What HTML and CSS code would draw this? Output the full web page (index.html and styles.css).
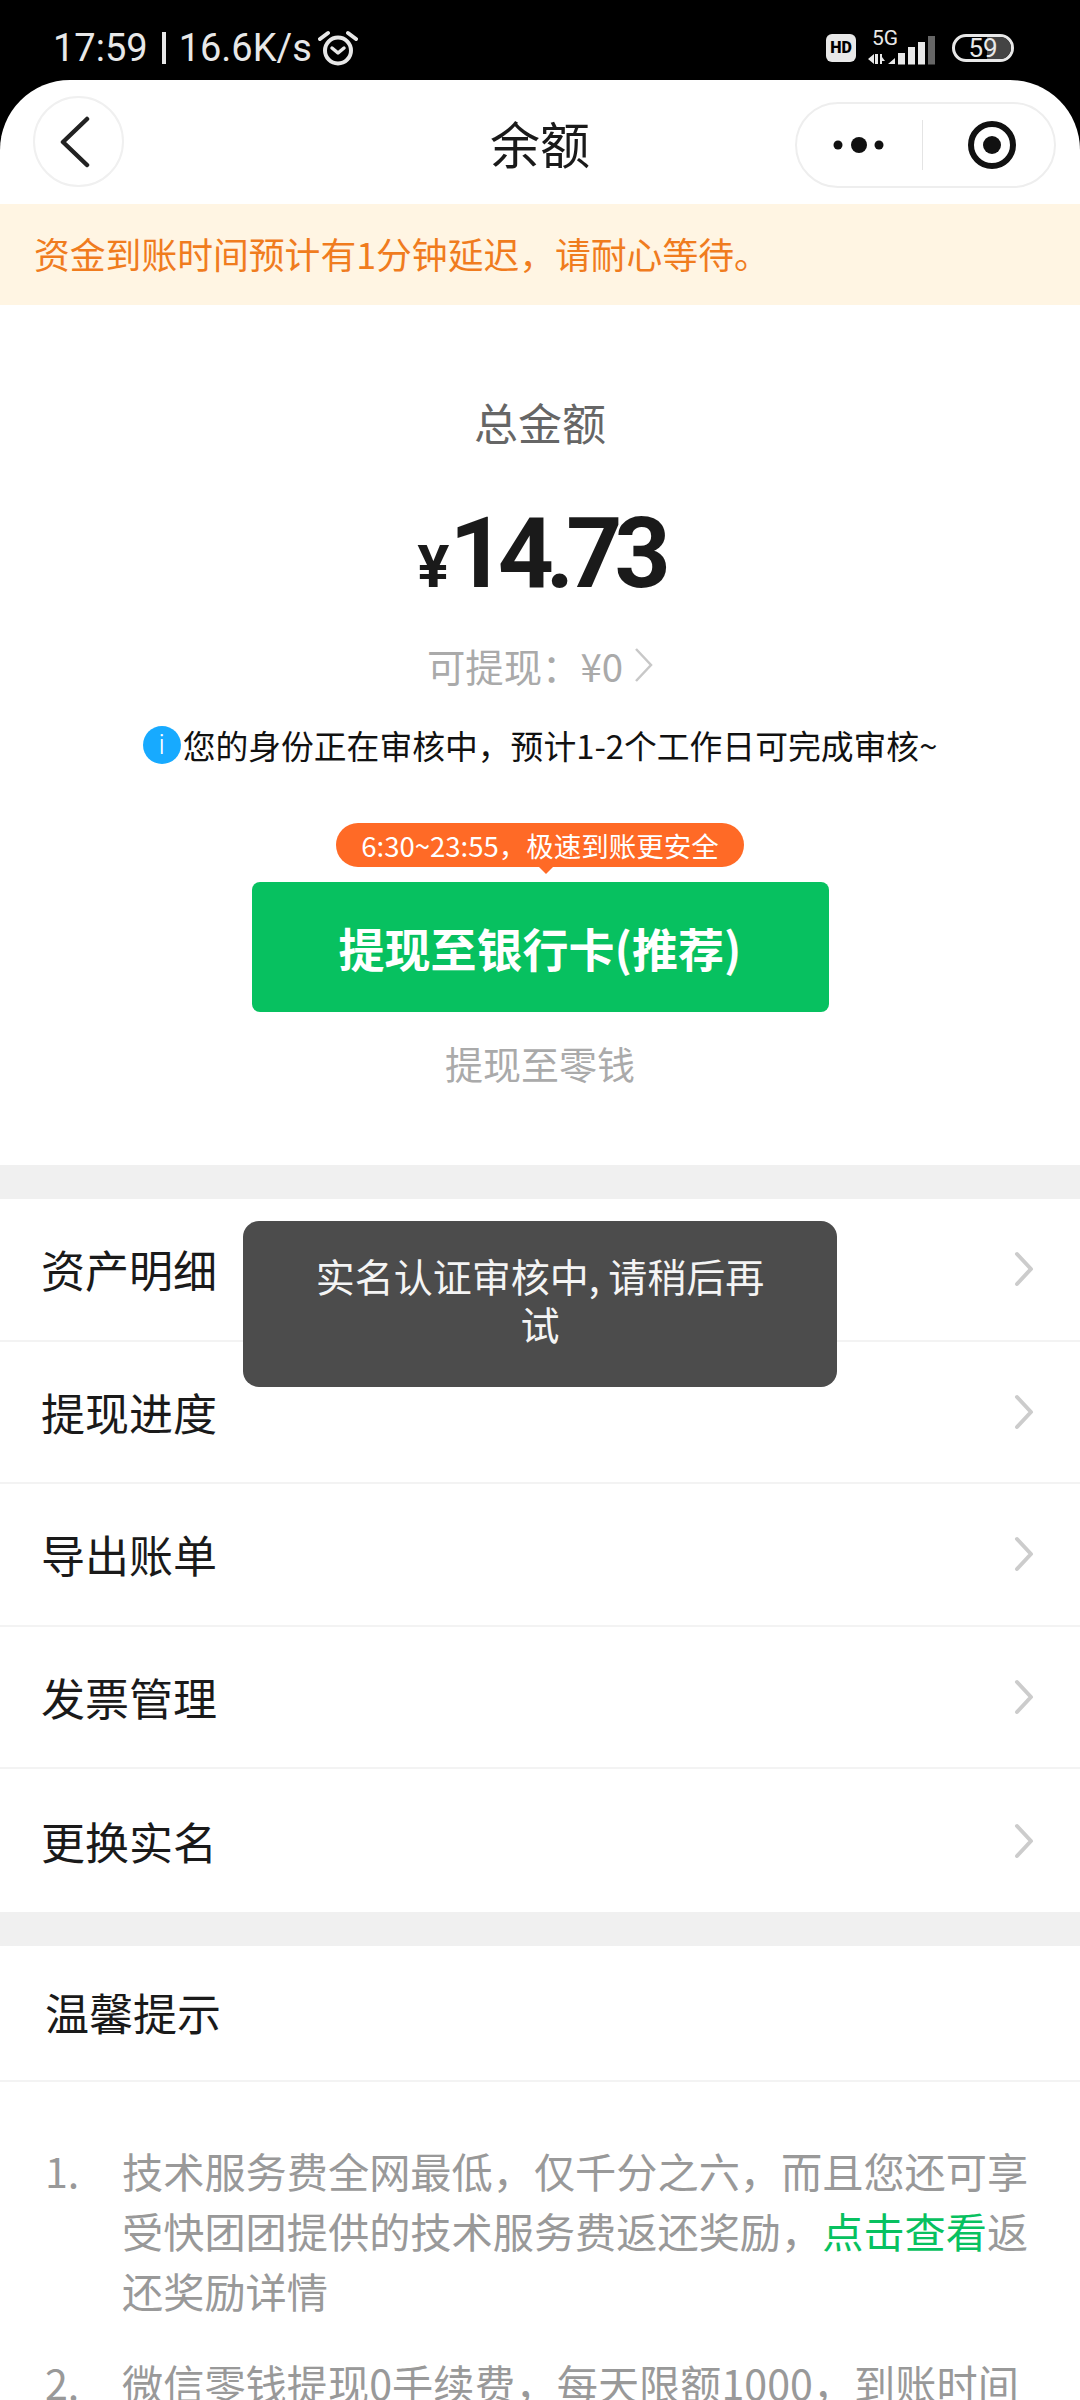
FILE: index.html
```html
<!DOCTYPE html>
<html lang="zh-CN">
<head>
    <meta charset="UTF-8">
    <meta name="viewport" content="width=device-width, initial-scale=1.0">
    <title>余额</title>
    <link rel="stylesheet" href="styles.css">
</head>
<body>
    <div class="status-bar">
        <div class="status-left">
            <span>17:59</span>
            <span class="status-sep"></span>
            <span>16.6K/s</span>
            <svg class="alarm" viewBox="0 0 40 36" width="40" height="36">
                <circle cx="20" cy="20.5" r="13" fill="none" stroke="#e8e8e8" stroke-width="4"/>
                <path d="M14 18l6 5 6-5" fill="none" stroke="#e8e8e8" stroke-width="3.5" stroke-linecap="round" stroke-linejoin="round"/>
                <path d="M2 9l8-6M38 9l-8-6" fill="none" stroke="#e8e8e8" stroke-width="4" stroke-linecap="round"/>
            </svg>
        </div>
        <div class="status-right">
            <span class="hd">HD</span>
            <div class="net">
                <span class="net-label">5G</span>
                <svg viewBox="0 0 68 30" width="68" height="30">
                    <path d="M0 24l6-5v10zM7 19h3v10H7zM12 19h2v10h-2zM14 22l3 4h-3zM20 29l7-6v6zM30 18h7v11.500h-7zM40 12h7v17.500h-7zM50 7h7v22.500h-7z" fill="#e8e8e8"/>
                    <path d="M60 1h7v28.500h-7z" fill="#666"/>
                </svg>
            </div>
            <div class="battery"><span class="battery-fill"></span><span class="battery-num">59</span></div>
        </div>
    </div>

    <div class="page">
        <div class="nav">
            <div class="nav-back">
                <svg viewBox="0 0 32 52" width="32" height="52">
                    <path d="M28 3L4 26l24 23" fill="none" stroke="#222" stroke-width="4.5" stroke-linecap="round" stroke-linejoin="round"/>
                </svg>
            </div>
            <div class="nav-title">余额</div>
            <div class="capsule">
                <div class="capsule-cell">
                    <svg viewBox="0 0 54 18" width="54" height="18">
                        <circle cx="5" cy="9" r="4.5" fill="#111"/>
                        <circle cx="26" cy="9" r="8" fill="#111"/>
                        <circle cx="46" cy="9" r="4.5" fill="#111"/>
                    </svg>
                </div>
                <div class="capsule-line"></div>
                <div class="capsule-cell capsule-cell-right">
                    <svg viewBox="0 0 48 48" width="48" height="48">
                        <circle cx="24" cy="24" r="21" fill="none" stroke="#111" stroke-width="6"/>
                        <circle cx="24" cy="24" r="9" fill="#111"/>
                    </svg>
                </div>
            </div>
        </div>

        <div class="notice">资金到账时间预计有1分钟延迟，请耐心等待。</div>

        <div class="summary">
            <div class="total-label">总金额</div>
            <div class="total"><span class="total-unit">¥</span>14.73</div>
            <div class="withdrawable">
                <span>可提现：¥0</span>
                <svg viewBox="0 0 20 36" width="20" height="36">
                    <path d="M3 2l15 16L3 34" fill="none" stroke="#c8c8c8" stroke-width="2.5"/>
                </svg>
            </div>
            <div class="verify">
                <span class="verify-icon">i</span>
                <span>您的身份正在审核中，预计1-2个工作日可完成审核~</span>
            </div>
            <div class="tag-row">
                <div class="tag">6:30~23:55，极速到账更安全</div>
            </div>
            <button class="btn-bank">提现至银行卡(推荐)</button>
            <div class="btn-wallet">提现至零钱</div>
        </div>

        <div class="gap"></div>

        <div class="menu">
            <div class="menu-row">
                <span>资产明细</span>
                <svg class="row-arrow" viewBox="0 0 20 36" width="20" height="36"><path d="M3 3l14 15L3 33" fill="none" stroke="#ccc" stroke-width="4" stroke-linecap="round" stroke-linejoin="round"/></svg>
            </div>
            <div class="menu-row">
                <span>提现进度</span>
                <svg class="row-arrow" viewBox="0 0 20 36" width="20" height="36"><path d="M3 3l14 15L3 33" fill="none" stroke="#ccc" stroke-width="4" stroke-linecap="round" stroke-linejoin="round"/></svg>
            </div>
            <div class="menu-row">
                <span>导出账单</span>
                <svg class="row-arrow" viewBox="0 0 20 36" width="20" height="36"><path d="M3 3l14 15L3 33" fill="none" stroke="#ccc" stroke-width="4" stroke-linecap="round" stroke-linejoin="round"/></svg>
            </div>
            <div class="menu-row">
                <span>发票管理</span>
                <svg class="row-arrow" viewBox="0 0 20 36" width="20" height="36"><path d="M3 3l14 15L3 33" fill="none" stroke="#ccc" stroke-width="4" stroke-linecap="round" stroke-linejoin="round"/></svg>
            </div>
            <div class="menu-row">
                <span>更换实名</span>
                <svg class="row-arrow" viewBox="0 0 20 36" width="20" height="36"><path d="M3 3l14 15L3 33" fill="none" stroke="#ccc" stroke-width="4" stroke-linecap="round" stroke-linejoin="round"/></svg>
            </div>
        </div>

        <div class="gap"></div>

        <div class="tips-title">温馨提示</div>
        <ol class="tips">
            <li class="tip">
                <span class="tip-num">1.</span>
                <div class="tip-text">技术服务费全网最低，仅千分之六，而且您还可享受快团团提供的技术服务费返还奖励，<span class="tip-link">点击查看</span>返还奖励详情</div>
            </li>
            <li class="tip">
                <span class="tip-num">2.</span>
                <div class="tip-text">微信零钱提现0手续费，每天限额1000，到账时间</div>
            </li>
        </ol>
    </div>

    <div class="toast">实名认证审核中, 请稍后再试</div>
</body>
</html>
```
FILE: styles.css
```css
* {
    box-sizing: border-box;
}
html, body {
    margin: 0;
    height: 2400px;
    overflow: hidden;
}
body {
    position: relative;
    width: 1080px;
    background-color: #000;
    font-family: "Noto Sans CJK SC", "Noto Sans", sans-serif;
    color: #1a1a1a;
}

/* status bar */
.status-bar {
    height: 80px;
    padding: 0 66px 0 53px;
    display: flex;
    justify-content: space-between;
    align-items: center;
    font-family: Roboto, sans-serif;
    color: #e8e8e8;
}
.status-left {
    display: flex;
    align-items: center;
    font-size: 38px;
    height: 36px;
    margin-top: 16px;
}
.status-sep {
    width: 4px;
    height: 32px;
    margin: 0 13px 0 14px;
    background-color: #e8e8e8;
}
.alarm {
    margin-left: 6px;
}
.status-right {
    display: flex;
    align-items: center;
    margin-top: 16px;
}
.hd {
    width: 30px;
    height: 28px;
    border-radius: 6px;
    background-color: #e8e8e8;
    color: #000;
    font-size: 16px;
    font-weight: 900;
    line-height: 28px;
    text-align: center;
}
.net {
    display: flex;
    flex-direction: column;
    width: 68px;
    margin-left: 12px;
    height: 34px;
}
.net-label {
    font-size: 21px;
    line-height: 15px;
    padding-left: 4px;
}
.net svg {
    display: block;
    margin-top: -11px;
}
.battery {
    position: relative;
    width: 62px;
    height: 28px;
    margin-left: 16px;
    border: 3px solid #e8e8e8;
    border-radius: 14px;
    overflow: hidden;
    font-size: 26px;
    line-height: 22px;
    text-align: center;
}
.battery-fill {
    position: absolute;
    top: 0;
    right: 0;
    bottom: 0;
    width: 24px;
    background-color: #444;
}
.battery-num {
    position: relative;
}

/* page sheet */
.page {
    height: 2320px;
    background-color: #fff;
    border-radius: 70px 70px 0 0;
    overflow: hidden;
}
.nav {
    position: relative;
    height: 124px;
}
.nav-back {
    position: absolute;
    left: 33px;
    top: 16px;
    width: 91px;
    height: 91px;
    border: 2px solid #f0f0f0;
    border-radius: 50%;
    display: flex;
    align-items: center;
    justify-content: center;
    padding-right: 8px;
}
.nav-title {
    padding-top: 25px;
    font-size: 50px;
    line-height: 74px;
    text-align: center;
}
.capsule {
    position: absolute;
    left: 795px;
    top: 22px;
    width: 261px;
    height: 86px;
    border: 2px solid #eee;
    border-radius: 43px;
    display: flex;
    align-items: center;
}
.capsule-cell {
    flex: 1;
    display: flex;
    justify-content: center;
}
.capsule-cell-right {
    padding-left: 6px;
}
.capsule-line {
    width: 1px;
    height: 50px;
    background-color: #e4e4e4;
}
.notice {
    height: 101px;
    padding-left: 34px;
    background-color: #fff5e3;
    color: #f07c1e;
    font-size: 35.8px;
    line-height: 98px;
}

/* amount */
.summary {
    height: 860px;
    display: flex;
    flex-direction: column;
    align-items: center;
}
.total-label {
    margin-top: 85px;
    font-size: 44px;
    line-height: 64px;
    color: #666;
}
.total {
    margin-top: 40px;
    font-family: Roboto, sans-serif;
    font-size: 98px;
    font-weight: 700;
    line-height: 120px;
    letter-spacing: -8px;
}
.total-unit {
    font-size: 60px;
    letter-spacing: 0;
}
.withdrawable {
    margin-top: 12px;
    display: flex;
    align-items: center;
    gap: 10px;
    font-size: 38.4px;
    line-height: 52px;
    color: #aaa;
}
.verify {
    margin-top: 30px;
    display: flex;
    align-items: center;
    gap: 2px;
    font-size: 32.8px;
    line-height: 48px;
    color: #111;
}
.verify-icon {
    width: 38px;
    height: 38px;
    border-radius: 50%;
    background-color: #17aaff;
    color: #fff;
    font-family: Roboto, sans-serif;
    font-size: 28px;
    font-weight: 300;
    line-height: 38px;
    text-align: center;
}
.tag-row {
    margin-top: 54px;
}
.tag {
    position: relative;
    padding: 0 25px;
    border-radius: 22px;
    background-color: #ff6a26;
    color: #fff;
    font-size: 27.5px;
    line-height: 44px;
}
.tag::after {
    content: "";
    position: absolute;
    left: 203px;
    bottom: -7px;
    border-left: 7px solid transparent;
    border-right: 7px solid transparent;
    border-top: 7px solid #ff6a26;
}
.btn-bank {
    margin-top: 15px;
    width: 577px;
    height: 130px;
    border: none;
    border-radius: 8px;
    background-color: #07c160;
    color: #fff;
    font-family: inherit;
    font-size: 46px;
    font-weight: 700;
}
.btn-wallet {
    margin-top: 23px;
    font-size: 38px;
    line-height: 56px;
    color: #aaa;
}
.gap {
    height: 34px;
    background-color: #f0f0f0;
}

/* list */
.menu-row {
    height: 142.6px;
    padding: 0 46px 0 41px;
    display: flex;
    justify-content: space-between;
    align-items: center;
    border-bottom: 2px solid #f3f3f3;
    font-size: 44px;
    color: #1a1a1a;
}
.menu-row:last-child {
    border-bottom: none;
}
.tips-title {
    height: 136px;
    padding-left: 45px;
    border-bottom: 2px solid #f3f3f3;
    font-size: 44px;
    line-height: 132px;
}
.tips {
    margin: 0;
    padding: 58px 50px 0 45px;
    list-style: none;
    font-size: 41.2px;
    line-height: 60px;
    color: #999;
}
.tip {
    display: flex;
    margin-bottom: 32px;
}
.tip-num {
    flex: none;
    width: 77px;
}
.tip-link {
    color: #07c160;
}

.toast {
    position: absolute;
    left: 243px;
    top: 1221px;
    width: 594px;
    padding: 30px 60px 40px;
    border-radius: 16px;
    background-color: #4c4c4c;
    color: #f4f4f4;
    font-size: 39px;
    line-height: 48px;
    text-align: center;
}
```
